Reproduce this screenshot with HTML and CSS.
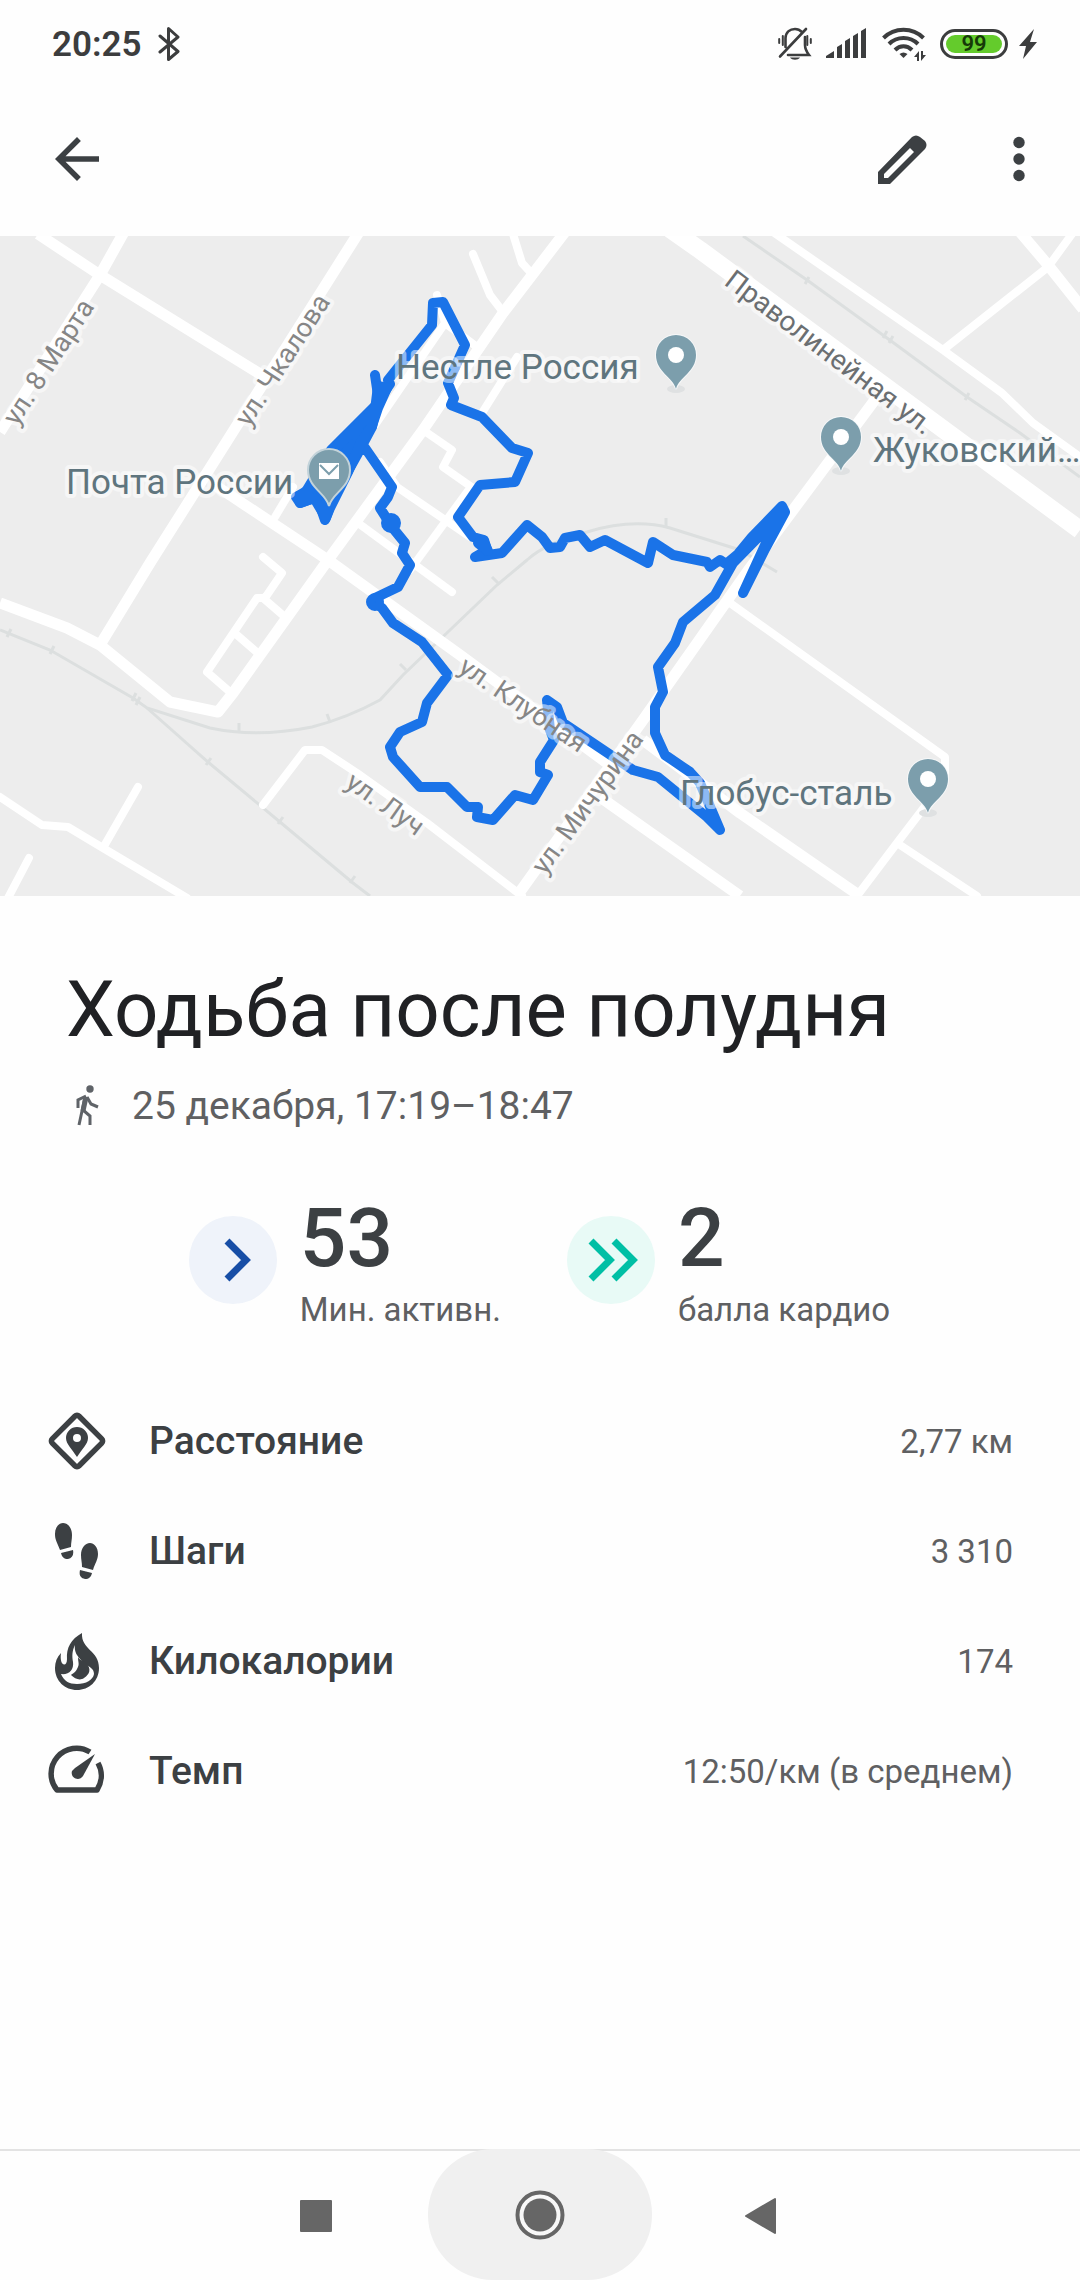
FILE: index.html
```html
<!DOCTYPE html>
<html lang="ru">
<head>
  <meta charset="UTF-8">
  <meta name="viewport" content="width=device-width, initial-scale=1.0">
  <title>Ходьба после полудня</title>
  <link rel="stylesheet" href="styles.css">
</head>
<body>
  <div class="status-bar">
    <span class="time">20:25</span>
    <svg class="bluetooth" width="22" height="36" viewBox="0 0 22 36" fill="none" stroke="#3c3d3e" stroke-width="3" stroke-linecap="round" stroke-linejoin="round"><path d="M2 10 20 25.500 10.500 33.500V2.500L20 11 2 26"/></svg>
    <div class="status-icons">
      <!-- muted bell -->
      <svg width="34" height="34" viewBox="0 0 34 34" fill="none" stroke="#3c3d3e" stroke-width="2.600" stroke-linecap="round"><path d="M7.500 20V11C8 5 12 2 17 2c3 0 5 1 7 3M27 10v8c0 4 1 6 4 10H10M2 29.500 28 2"/><path d="M1.200 12v4M4.800 9v9M29.300 9v9M32.800 12v4" stroke-width="2"/><path d="M12 30.500h10c-2 3-8 3-10 0z" fill="#3c3d3e" stroke="none"/></svg>
      <!-- signal -->
      <svg width="42" height="34" viewBox="0 0 42 34" fill="#3c3d3e"><path d="M0 31v-2l8-5v7zM11 31V20l5-3v14zM19 31V14l5-3v20zM27 31V9l5-3v25zM35 31V4l5-3v30z"/></svg>
      <!-- wifi -->
      <svg width="44" height="36" viewBox="0 0 44 36" fill="none" stroke="#3c3d3e" stroke-width="4"><path d="M1.500 12c11-11 29-11 40 0M7 18c8-8 21-8 29 0M13 24c5-5 12-5 17 0"/><path d="M17.500 28q4-3 8 0l-4 4z" fill="#3c3d3e" stroke="none"/><path d="M37 25v10h-2v-4h-3zM39 35V25h2v4h3z" fill="#3c3d3e" stroke="none"/></svg>
      <span class="battery"><span class="battery-level">99</span></span>
      <svg width="20" height="32" viewBox="0 0 20 32" fill="#3c3d3e"><path d="M16 1 1 18h7L5 31l14-17h-7z"/></svg>
    </div>
  </div>

  <header class="app-bar">
    <button type="button" aria-label="Назад"><svg width="66" height="66" viewBox="0 0 24 24" fill="#3c4043"><path d="M20 11H7.830l5.590-5.590L12 4l-8 8 8 8 1.410-1.410L7.830 13H20v-2z"/></svg></button>
    <div class="actions">
      <button type="button" aria-label="Изменить"><svg width="66" height="66" viewBox="0 0 66 66"><path d="M11 46v12h12l35-35q3-4 0-8l-5-4q-4-3-8 0zM17 48l26-26 4 4-26 26h-4z" fill="#3c4043" fill-rule="evenodd"/></svg></button>
      <button type="button" aria-label="Ещё"><svg width="66" height="66" viewBox="0 0 66 66" fill="#3c4043"><circle cx="33" cy="16.500" r="5.700"/><circle cx="33" cy="33" r="5.700"/><circle cx="33" cy="49.500" r="5.700"/></svg></button>
    </div>
  </header>

  <svg class="map" viewBox="0 236 1080 660">
    <defs>
      <g id="pin">
        <ellipse cx="0" cy="34" rx="9" ry="4" fill="#dfe1e2"/>
        <path d="M0 34C-3 22-20 17-20 0a20 20 0 0 1 40 0C20 17 3 22 0 34z" fill="#7c9eac" stroke="#f6f8f9" stroke-width="2" paint-order="stroke"/>
      </g>
    </defs>

    <!-- railway -->
    <g class="rail">
      <path d="M743 236 807 280 887 338 967 397 1020 433 1080 477"/>
      <path d="M0 630 50 650 133 698 147 708 210 728Q257 738 312 727 347 718 380 700L403 675 497 585 527 560Q547 542 587 532 633 518 670 528L740 550 777 572"/>
      <path d="M147 708 208 762 280 822 353 883 370 896"/>
      <path class="ties" d="m805 284 4-7m74 61 4-7m2 12 4-7m72 64 4-7M7 637l4-8m39 25 4-8m78 55 4-8m0 12 4-8m99 34v-8m91-1-3-8M206 765l5-7m67 66 5-7m67 66 5-7m45-212 6 6m86-93 6 6m168-65v8"/>
    </g>

    <!-- streets -->
    <g class="road">
      <path class="wide" d="M670 229 700 250 1080 530"/>
      <path d="M38 234 100 275 265 377"/>
      <path d="M124 232 100 275 0 432"/>
      <path d="M359 232 150 563 100 645"/>
      <path d="M213 484 233 497 328 560 460 655 607 763M600 797 740 896"/>
      <path d="M877 397 750 568 643 720 517 896"/>
      <path d="M0 603 67 628 100 645 170 702 218 712 233 693 328 560 423 430 503 313 565 232"/>
      <path d="M1020 232 1048 265 1083 309"/>
      <path d="M643 740 740 813 860 896"/>
      <path class="thin" d="M773 232 943 350 1002 393 1033 423 1080 457M943 350 1048 267 1072 234"/>
      <path class="thin" d="M730 603 945 757V780L897 843 857 896M897 843 977 896"/>
      <path class="thin" d="M263 557 282 573 265 598H257L207 672 230 692M263 598 285 617M237 635 260 655"/>
      <path class="thin" d="M0 797 42 825 68 827 103 848 187 898M103 848 138 787M8 898 29 858"/>
      <path class="thin" d="M263 805 305 750H322L357 773 427 823 522 896"/>
      <path class="thin" d="M275 517 293 487M358 523 452 592M410 570 470 488M380 462 397 487 470 537M423 430 452 450 443 467 473 488"/>
      <path class="thin" d="M437 295 445 323 477 347M445 323 375 425M517 357 482 413M473 254 490 295 503 312M513 234 522 263 533 275"/>
    </g>

    <!-- walked route -->
    <g class="route">
      <path d="M375 375 379 402 345 436 331 450 305 493 296 497 300 503 317 497 325 520 333 498 357 455 372 427 377 403 390 384 388 380 432 325 433 303 443 302 465 345 448 383 454 398 451 405 482 417 512 448 528 453 515 482 480 485 458 517 473 537 484 540 487 550 475 557 502 553 527 525 542 537 550 548 560 547 565 538 580 535 590 547 605 540 648 563 653 542 673 555 707 562 710 567 720 560 726 564 738 554 752 537 782 506 785 512 765 549 743 593 765 545 775 520 733 563 715 595 683 622 675 643 658 667 663 692 655 707V733L665 755 690 772 700 783 720 830 707 817 658 777 633 770 563 723 557 707 547 700 550 730 554 740 540 762V772L548 775 533 800 515 795 493 820 477 817 478 807H467L447 787H420L393 757 390 747 400 732 422 722 427 703 448 675 422 642 393 623 382 608 375 603V598L398 587 410 565 402 553 405 543 392 527 380 508 388 497 392 487 363 445"/>
      <path class="route-fill" d="M375 410 338 446 325 480 298 496 300 503 314 498 326 518 330 508 348 472 361 442 372 426 378 408 387 388 378 386z"/>
      <path class="route-fill" d="M484 542 488 551 478 543z"/>
      <circle cx="391" cy="523" r="5"/>
      <circle cx="375" cy="602" r="4"/>
    </g>

    <use href="#pin" x="676" y="355"/>
    <circle cx="676" cy="355" r="8" fill="#fff"/>
    <use href="#pin" x="841" y="437"/>
    <circle cx="841" cy="437" r="8" fill="#fff"/>
    <use href="#pin" x="928" y="779"/>
    <circle cx="928" cy="779" r="8" fill="#fff"/>
    <path d="M329 506C326 493 308 488 308 470a21 21 0 0 1 42 0C350 488 332 493 329 506z" fill="#7c9eac" stroke="#c3d3da" stroke-width="2"/>
    <rect x="319" y="463" width="20" height="16" fill="#fff"/>
    <path d="m320 465 9 9 9-9" fill="none" stroke="#7c9eac" stroke-width="2"/>

    <g class="place">
      <text x="396" y="379">Нестле Россия</text>
      <text x="66" y="494">Почта России</text>
      <text x="873" y="462">Жуковский…</text>
      <text x="680" y="805">Глобус-сталь</text>
    </g>
    <g class="street">
      <text transform="translate(17 427) rotate(-57)">ул. 8 Марта</text>
      <text transform="translate(249 428) rotate(-57)">ул. Чкалова</text>
      <text class="main" transform="translate(723 284) rotate(37)">Праволинейная ул.</text>
      <text transform="translate(457 671) rotate(34)">ул. Клубная</text>
      <text transform="translate(545 876) rotate(-54)">ул. Мичурина</text>
      <text transform="translate(344 786) rotate(35)">ул. Луч</text>
    </g>
  </svg>

  <main>
    <h1>Ходьба после полудня</h1>
    <p class="date">
      <svg width="36" height="44" viewBox="0 0 36 44" fill="none" stroke="#5f6368" stroke-width="3"><circle cx="22" cy="5" r="3.700" fill="#5f6368" stroke="none"/><path d="M17 13 11 41M18 12l-8 4v8M19 13l4 7 7 3M15 26l7 6v9"/><path d="M18 13 15 27" stroke-width="5"/></svg>
      <span>25 декабря, 17:19–18:47</span>
    </p>

    <div class="scores">
      <div class="score">
        <svg width="88" height="88" viewBox="0 0 88 88" fill="none"><circle cx="44" cy="44" r="44" fill="#eff3fa"/><path d="m38 25 19 19-19 19" stroke="#174ea6" stroke-width="7"/></svg>
        <div><strong>53</strong><span>Мин. активн.</span></div>
      </div>
      <div class="score">
        <svg width="88" height="88" viewBox="0 0 88 88" fill="none"><circle cx="44" cy="44" r="44" fill="#e8faf6"/><path d="m24 25 19 19-19 19M47 25l19 19-19 19" stroke="#00bfa5" stroke-width="7"/></svg>
        <div><strong>2</strong><span>балла кардио</span></div>
      </div>
    </div>

    <dl class="metrics">
      <div>
        <svg width="66" height="66" viewBox="0 0 66 66"><rect x="14" y="14" width="38" height="38" rx="3" transform="rotate(45 33 33)" fill="none" stroke="#3c4043" stroke-width="5.500"/><path d="M33 49C28 41 22 36 22 30a11 11 0 0 1 22 0c0 6-6 11-11 19zM33 26a4 4 0 1 0 0 8 4 4 0 0 0 0-8z" fill="#3c4043" fill-rule="evenodd"/></svg>
        <dt>Расстояние</dt>
        <dd>2,77 км</dd>
      </div>
      <div>
        <svg width="66" height="66" viewBox="0 0 66 66" fill="#3c4043"><path d="M16 32C13 24 11 22 11 16c0-7 4-11 8-11 5 0 9 5 9 12 0 5-1 7-1 12zM17 35l12-3c1 5-1 8-5 9-4 0-6-2-7-6zM38 49c0-5-1-7-1-12 0-7 4-12 9-12 4 0 8 4 8 11 0 6-3 9-5 16zM36 52l12 3c-1 4-3 6-7 6-5-1-6-4-5-9z"/></svg>
        <dt>Шаги</dt>
        <dd>3 310</dd>
      </div>
      <div>
        <svg width="66" height="66" viewBox="0 0 66 66" fill="none"><path d="M38 5C27 11 22 20 23 31c0 9-8 7-6-6-4 4-6 9-6 15 0 13 10 22 22 22s22-9 22-22C55 22 37 22 38 5z" fill="#3c4043"/><path d="M31 17c-1 7 2 11 8 17 6 5 11 6 11 12-1 6-8 10-17 10-8 0-13-3-16-10 8 1 13-4 12-12-1-6-1-11 2-17z" fill="#fefefe"/><path d="M34 29c0 6 2 7-1 12-1 3-5 5-6 6 4 4 9 6 13 3 6-4 7-9 3-14-3-4-7-3-9-7z" fill="#3c4043"/></svg>
        <dt>Килокалории</dt>
        <dd>174</dd>
      </div>
      <div>
        <svg width="66" height="66" viewBox="0 0 66 66" fill="none"><path d="M46 14A25.500 25.500 0 0 0 13 52h40c5-8 6-18 1-27" stroke="#3c4043" stroke-width="5.500" stroke-linejoin="round"/><path d="M51 16 39 38c-4 6-13 2-11-5l3-3z" fill="#3c4043"/></svg>
        <dt>Темп</dt>
        <dd>12:50/км (в среднем)</dd>
      </div>
    </dl>
  </main>

  <nav class="nav-bar">
    <button type="button" aria-label="Недавние"><svg width="40" height="40" viewBox="0 0 40 40"><rect x="4" y="4" width="32" height="32" rx="1" fill="#666"/></svg></button>
    <button type="button" class="pressed" aria-label="Домой"><svg width="50" height="50" viewBox="0 0 50 50"><circle cx="25" cy="25" r="22.500" fill="#f8f8f8" stroke="#666" stroke-width="4"/><circle cx="25" cy="25" r="16.500" fill="#666"/></svg></button>
    <button type="button" aria-label="Назад"><svg width="40" height="40" viewBox="0 0 40 40"><path d="M2 20 31 3v34z" fill="#666" stroke="#666" stroke-width="2" stroke-linejoin="round"/></svg></button>
  </nav>
</body>
</html>
```
FILE: styles.css
```css
* {
  box-sizing: border-box;
}
body {
  display: flex;
  flex-direction: column;
  min-height: 100vh;
  margin: 0;
  background: #fefefe;
  color: #5f6062;
  font-family: Roboto, "Noto Sans", sans-serif;
}
button {
  display: flex;
  align-items: center;
  justify-content: center;
  padding: 0;
  border: none;
  background: none;
  cursor: pointer;
}
svg {
  display: block;
  flex-shrink: 0;
}

/* status bar */
.status-bar {
  display: flex;
  align-items: center;
  height: 88px;
  padding: 0 42px 0 52px;
  color: #3c3d3e;
}
.time {
  margin-right: 16px;
  font-size: 35px;
  font-weight: 600;
}
.status-icons {
  display: flex;
  align-items: center;
  gap: 14px;
  margin-left: auto;
}
.battery {
  width: 68px;
  height: 30px;
  padding: 3px;
  border: 3px solid #3c3d3e;
  border-radius: 15px;
}
.battery-level {
  display: block;
  border-radius: 9px;
  background: #64cb2c;
  color: #163a08;
  font-size: 22px;
  font-weight: 600;
  line-height: 18px;
  text-align: center;
}
.status-icons svg:last-child {
  margin-left: -4px;
}

/* app bar */
.app-bar {
  display: flex;
  align-items: center;
  justify-content: space-between;
  height: 148px;
  padding: 0 28px 6px 44px;
}
.actions {
  display: flex;
  gap: 53px;
}

/* map */
.map {
  width: 100%;
  height: auto;
  background: #ededed;
}
.rail {
  fill: none;
  stroke: #dcdfdf;
  stroke-width: 3;
}
.road {
  fill: none;
  stroke: #fff;
  stroke-width: 11;
  stroke-linejoin: round;
}
.road .wide {
  stroke-width: 18;
}
.road .thin {
  stroke-width: 8;
  stroke-linecap: round;
}
.route {
  fill: none;
  stroke: #1a73e8;
  stroke-width: 10;
  stroke-linecap: round;
  stroke-linejoin: round;
}
.route-fill,
.route circle {
  fill: #1a73e8;
}
.place,
.street {
  stroke: rgba(255, 255, 255, 0.5);
  stroke-width: 8;
  stroke-linejoin: round;
  paint-order: stroke;
}
.place {
  fill: #5f757e;
  font-size: 35px;
}
.street {
  fill: #868686;
  font-size: 27px;
}
.street .main {
  fill: #6b6f72;
  font-size: 28px;
}

/* session details */
main {
  padding: 66px 67px 0 48px;
}
h1 {
  margin: 0 0 24px 18px;
  color: #202124;
  font-size: 78px;
  font-weight: 400;
  line-height: 96px;
}
.date {
  display: flex;
  align-items: center;
  gap: 28px;
  margin: 0 0 60px 20px;
  font-size: 39px;
  line-height: 48px;
}
.scores {
  display: flex;
  justify-content: center;
  gap: 66px;
  margin: 0 0 56px 18px;
}
.score {
  display: flex;
  align-items: center;
  gap: 23px;
}
.score strong,
.score span {
  display: block;
}
.score strong {
  margin-bottom: 4px;
  color: #3c4043;
  font-size: 82px;
  font-weight: 500;
  line-height: 96px;
}
.score span {
  font-size: 33px;
  line-height: 40px;
}
.metrics {
  margin: 0;
}
.metrics div {
  display: flex;
  align-items: center;
  height: 110px;
}
.metrics svg {
  margin: 0 39px 0 -4px;
}
.metrics dt {
  color: #3c4043;
  font-size: 39px;
  font-weight: 500;
}
.metrics dd {
  margin: 0 0 0 auto;
  font-size: 33px;
}

/* system navigation */
.nav-bar {
  display: flex;
  align-items: stretch;
  justify-content: center;
  height: 131px;
  margin-top: auto;
  border-top: 2px solid #e3e3e3;
}
.nav-bar button {
  width: 224px;
}
.nav-bar .pressed {
  margin-top: -2px;
  border-radius: 65px;
  background: #f0f0f0;
}
```
